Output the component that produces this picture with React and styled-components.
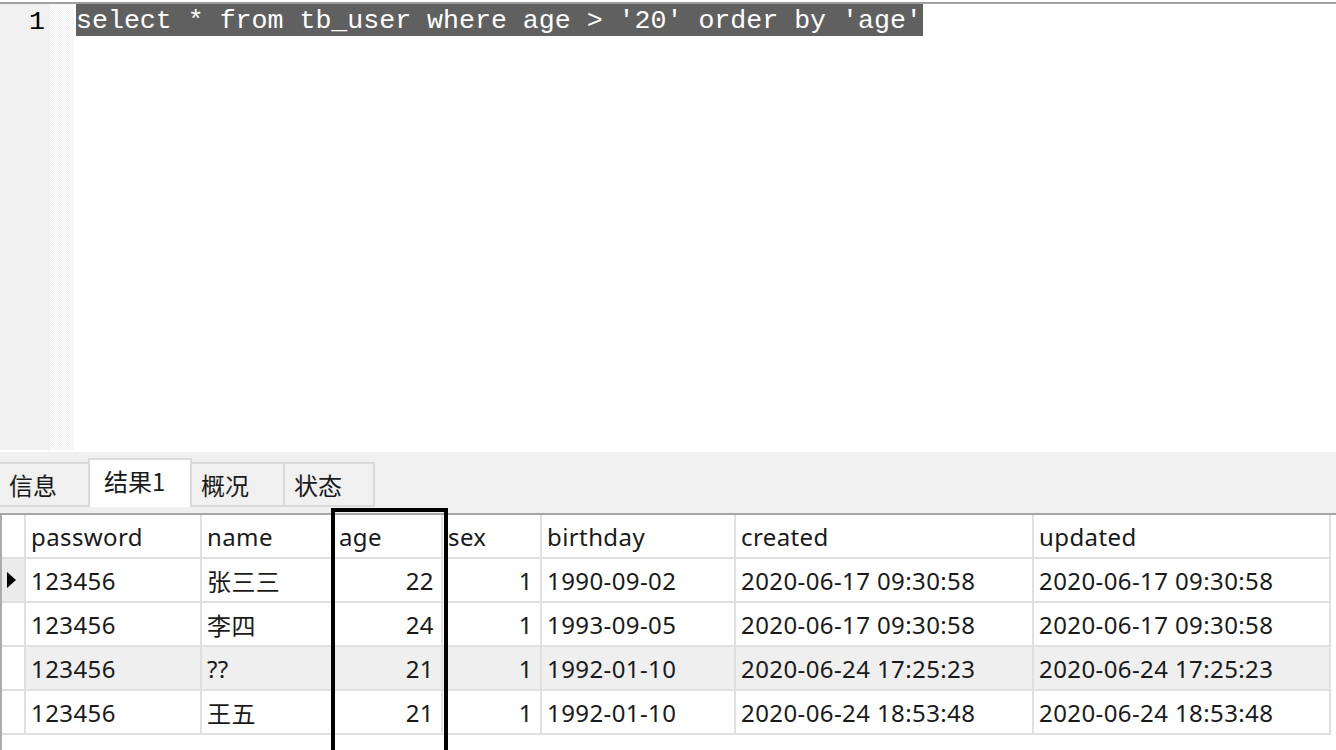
import styled, { createGlobalStyle } from "styled-components";

const GlobalStyle = createGlobalStyle`
  html, body {
    margin: 0;
    padding: 0;
    background: #ffffff;
    overflow: hidden;
  }
`;

const COLUMNS = [
  { key: "password", label: "password" },
  { key: "name", label: "name" },
  { key: "age", label: "age", numeric: true },
  { key: "sex", label: "sex", numeric: true },
  { key: "birthday", label: "birthday" },
  { key: "created", label: "created" },
  { key: "updated", label: "updated" },
];

const ROWS = [
  { password: "123456", name: "张三三", age: 22, sex: 1, birthday: "1990-09-02", created: "2020-06-17 09:30:58", updated: "2020-06-17 09:30:58", current: true },
  { password: "123456", name: "李四", age: 24, sex: 1, birthday: "1993-09-05", created: "2020-06-17 09:30:58", updated: "2020-06-17 09:30:58" },
  { password: "123456", name: "??", age: 21, sex: 1, birthday: "1992-01-10", created: "2020-06-24 17:25:23", updated: "2020-06-24 17:25:23", shaded: true },
  { password: "123456", name: "王五", age: 21, sex: 1, birthday: "1992-01-10", created: "2020-06-24 18:53:48", updated: "2020-06-24 18:53:48" },
];

const TABS = [
  { label: "信息", width: 92 },
  { label: "结果1", width: 104, active: true },
  { label: "概况", width: 95 },
  { label: "状态", width: 92 },
];

const App = () => {
  return (
    <>
      <GlobalStyle />
      <Window>
        <TopRule />
        <Editor>
          <Gutter>
            <LineNo>1</LineNo>
          </Gutter>
          <Dots />
          <Code>
            <Selected>select * from tb_user where age &gt; '20' order by 'age'</Selected>
          </Code>
        </Editor>
        <Splitter />
        <Results>
          <TabBar>
            {TABS.map((tab) => (
              <Tab key={tab.label} active={tab.active} width={tab.width}>
                {tab.label}
              </Tab>
            ))}
          </TabBar>
          <Grid>
            <HeadCell indicator />
            {COLUMNS.map((col) => (
              <HeadCell key={col.key}>{col.label}</HeadCell>
            ))}
            {ROWS.map((row, i) => (
              <Row key={i}>
                <IndicatorCell current={row.current}>
                  {row.current && <Arrow />}
                </IndicatorCell>
                {COLUMNS.map((col) => (
                  <DataCell
                    key={col.key}
                    numeric={col.numeric}
                    shaded={row.shaded}
                  >
                    {row[col.key]}
                  </DataCell>
                ))}
              </Row>
            ))}
          </Grid>
          <Highlight />
        </Results>
      </Window>
    </>
  );
};

export default App;

const Window = styled.div`
  width: 1336px;
  height: 750px;
  display: flex;
  flex-direction: column;
  background: #ffffff;
  overflow: hidden;
`;

const TopRule = styled.div`
  height: 2px;
  margin-top: 2px;
  background: #a0a0a0;
  flex-shrink: 0;
`;

const Editor = styled.div`
  height: 446px;
  display: flex;
  flex-shrink: 0;
`;

const Gutter = styled.div`
  width: 50px;
  background: #f0f0f0;
  display: flex;
  justify-content: flex-end;
  padding-right: 5px;
  padding-top: 2px;
  box-sizing: border-box;
`;

const LineNo = styled.div`
  font-family: "Liberation Mono", "DejaVu Sans Mono", monospace;
  font-size: 26.6px;
  line-height: 32px;
  color: #000000;
`;

const Dots = styled.div`
  width: 24px;
  background: repeating-conic-gradient(#f0f0f0 0 25%, #ffffff 0 50%) 0 0 / 2px 2px;
`;

const Code = styled.div`
  flex: 1;
  padding-left: 2px;
  background: #ffffff;
`;

const Selected = styled.span`
  display: inline-block;
  height: 32px;
  line-height: 34px;
  padding-right: 1px;
  font-family: "Liberation Mono", "DejaVu Sans Mono", monospace;
  font-size: 26.6px;
  color: #ffffff;
  background: #606060;
  white-space: pre;
`;

const Splitter = styled.div`
  height: 2px;
  background: #ffffff;
  flex-shrink: 0;
`;

const Results = styled.div`
  position: relative;
  flex: 1;
  display: flex;
  flex-direction: column;
  background: #f0f0f0;
`;

const TabBar = styled.div`
  height: 55px;
  padding-bottom: 6px;
  display: flex;
  align-items: flex-end;
  flex-shrink: 0;
`;

const Tab = styled.div`
  position: relative;
  z-index: ${(p) => (p.active ? 1 : 0)};
  width: ${(p) => p.width}px;
  height: ${(p) => (p.active ? 49 : 45)}px;
  margin-left: -2px;
  padding-left: ${(p) => (p.active ? 14 : 9)}px;
  padding-bottom: ${(p) => (p.active ? 6 : 0)}px;
  box-sizing: border-box;
  border: 2px solid #dadada;
  border-bottom: ${(p) => (p.active ? "none" : "2px solid #dadada")};
  background: ${(p) => (p.active ? "#ffffff" : "#f0f0f0")};
  display: flex;
  align-items: center;
  font-family: "Noto Sans CJK SC", "Noto Sans", sans-serif;
  font-size: 24px;
  color: #1a1a1a;
`;

const Grid = styled.div`
  flex: 1;
  display: grid;
  grid-template-columns: 24px 176px 132px 109px 99px 194px 298px 297px;
  grid-auto-rows: 44px;
  align-content: start;
  background: #ffffff;
  border-top: 2px solid #a4a4a4;
  border-left: 2px solid #acacac;
  font-family: "Noto Sans", "Noto Sans CJK SC", sans-serif;
  font-size: 24px;
  letter-spacing: 0.4px;
  color: #1a1a1a;
`;

const Row = styled.div`
  display: contents;
`;

const HeadCell = styled.div`
  box-sizing: border-box;
  border-right: 2px solid #e0e0e0;
  border-bottom: 2px solid #e0e0e0;
  padding-left: ${(p) => (p.indicator ? 0 : 5)}px;
  display: flex;
  align-items: center;
  white-space: nowrap;
`;

const IndicatorCell = styled.div`
  box-sizing: border-box;
  border-right: 2px solid #e0e0e0;
  border-bottom: 2px solid #e0e0e0;
  background: ${(p) => (p.current ? "#ececec" : "#ffffff")};
  display: flex;
  align-items: center;
  padding-left: 5px;
`;

const Arrow = styled.div`
  width: 0;
  height: 0;
  border-top: 8px solid transparent;
  border-bottom: 8px solid transparent;
  border-left: 9px solid #000000;
`;

const DataCell = styled.div`
  box-sizing: border-box;
  border-right: 2px solid #e0e0e0;
  border-bottom: 2px solid #e0e0e0;
  background: ${(p) => (p.shaded ? "#efefef" : "#ffffff")};
  display: flex;
  align-items: center;
  justify-content: ${(p) => (p.numeric ? "flex-end" : "flex-start")};
  padding: ${(p) => (p.numeric ? "0 7px 0 0" : "0 0 0 5px")};
  white-space: nowrap;
  overflow: hidden;
`;

const Highlight = styled.div`
  position: absolute;
  left: 331px;
  top: 56px;
  width: 117px;
  height: 260px;
  box-sizing: border-box;
  border: 4px solid #000000;
  pointer-events: none;
`;
